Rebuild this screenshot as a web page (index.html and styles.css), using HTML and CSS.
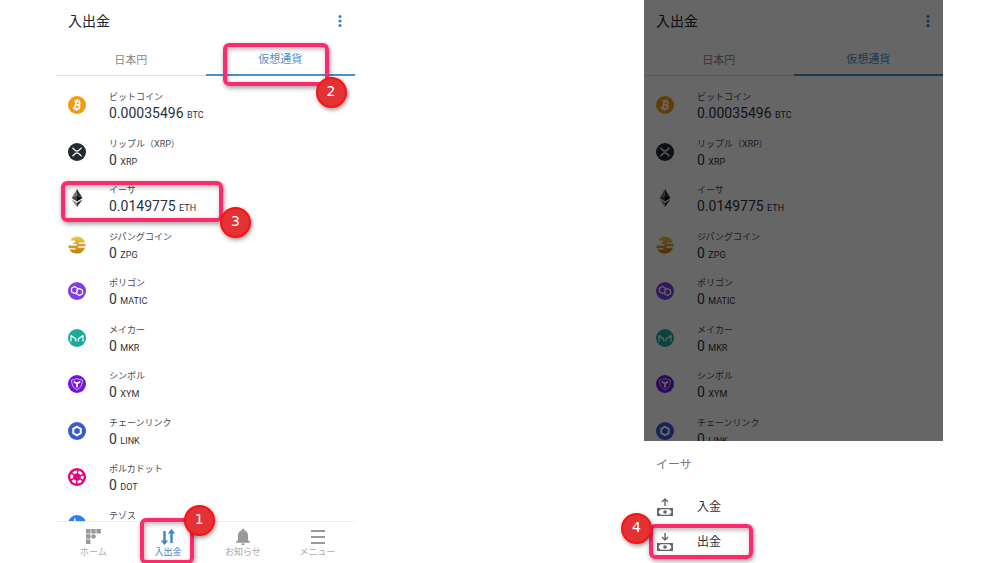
FILE: index.html
```html
<!DOCTYPE html>
<html lang="ja">
<head>
<meta charset="utf-8">
<meta name="viewport" content="width=device-width, initial-scale=1">
<title>入出金</title>
<link rel="stylesheet" href="styles.css">
</head>
<body>
<svg class="sprite" aria-hidden="true">
  <symbol id="btc" viewBox="0 0 36 36">
    <circle cx="18" cy="18" r="18" fill="#f29a0b"/>
    <g transform="rotate(14 18 18)" fill="none" stroke="#fff" stroke-width="3.400">
      <path d="M11 11h8.500a3.300 3.300 0 0 1 0 6.800H15M15 17.800h5.500a3.700 3.700 0 0 1 0 7.400H11M15 11v14"/>
      <path d="M16 6.500v4M20 6.500v4M16 25.500v4M20 25.500v4" stroke-width="2.400"/>
    </g>
  </symbol>
  <symbol id="xrp" viewBox="0 0 36 36">
    <circle cx="18" cy="18" r="18" fill="#23292f"/>
    <path d="M9 9.500l5 5q4 3.500 8 0l5-5M9 26.500l5-5q4-3.500 8 0l5 5" fill="none" stroke="#fff" stroke-width="2.200"/>
  </symbol>
  <symbol id="eth" viewBox="0 0 36 36">
    <path d="M18 0L7 18l11-5z" fill="#777"/><path d="M18 0l11 18-11-5z" fill="#333"/>
    <path d="M7 18l11-5v12z" fill="#444"/><path d="M29 18l-11-5v12z" fill="#111"/>
    <path d="M7 21l11 6.500V36z" fill="#888"/><path d="M29 21l-11 6.500V36z" fill="#333"/>
  </symbol>
  <linearGradient id="gold" x1="0" y1="0" x2="0" y2="1"><stop offset="0" stop-color="#e9c84a"/><stop offset="1" stop-color="#c27c0c"/></linearGradient>
  <symbol id="zpg" viewBox="0 0 36 36">
    <path d="M5 9Q9 1 18 1q10 0 14.500 8.500L34 13H23q-1.500 0-1.500 1.200t1.500 1.300h12v5H22q-1.500 0-1.500 1.500t1.500 1.500h12Q30 35 18 35 7 35 2.500 27H14q1.500 0 1.500-1.300T14 24.500H1V19h15q1.500 0 1.500-1.500T16 16h-4.500q-1.500 0-1.500-1.500t1.500-1.500H13q1.500 0 1.500-2T13 9z" fill="url(#gold)"/>
  </symbol>
  <symbol id="matic" viewBox="0 0 36 36">
    <circle cx="18" cy="18" r="18" fill="#7b3fe4"/>
    <path d="M19 20l-6 3-6-3.500v-7L13 9l6 3.500v3l-2 4.500M17 16l6-3 6 3.500v7L23 27l-6-3.500v-3l2-4.500" fill="none" stroke="#fff" stroke-width="2.600" stroke-linejoin="round"/>
  </symbol>
  <symbol id="mkr" viewBox="0 0 36 36">
    <circle cx="18" cy="18" r="18" fill="#1aab9b"/>
    <path d="M6 25V13l9.500 7v5M30 25V13l-9.500 7v5" fill="none" stroke="#fff" stroke-width="2.400" stroke-linejoin="round"/>
  </symbol>
  <symbol id="xym" viewBox="0 0 36 36">
    <circle cx="18" cy="18" r="18" fill="#7413dc"/>
    <path d="M18 7q5 3 11 3 0 14-11 20Q7 24 7 10q6 0 11-3z" fill="none" stroke="#dcc5fa" stroke-width="1.800"/>
    <path d="M11.500 13.500l6.500 3.500 6.500-3.500M18 17v8" fill="none" stroke="#fff" stroke-width="3.600"/>
  </symbol>
  <symbol id="link" viewBox="0 0 36 36">
    <circle cx="18" cy="18" r="18" fill="#355ad2"/>
    <path d="M18 9.500l7.500 4.250v8.500L18 26.500l-7.500-4.250v-8.500z" fill="none" stroke="#fff" stroke-width="4"/>
  </symbol>
  <symbol id="dot" viewBox="0 0 36 36">
    <circle cx="18" cy="18" r="18" fill="#e6007a"/>
    <circle cx="18" cy="18" r="10.500" fill="none" stroke="#fff" stroke-width="5.500" stroke-dasharray="8 3" stroke-dashoffset="4"/>
  </symbol>
  <symbol id="xtz" viewBox="0 0 36 36">
    <circle cx="18" cy="18" r="18" fill="#2c7df7"/>
    <path d="M7 13.500h20l-7 6q6 0 6 5t-6 4M13.500 7v15q0 4 4 4" fill="none" stroke="#fff" stroke-width="3"/>
  </symbol>
  <symbol id="note" viewBox="0 0 18 20">
    <path fill-rule="evenodd" d="M1 11h16v8H1zM4.500 12.300Q4.300 13.500 2.800 13.700v2.600q1.500.200 1.700 1.400h9q.200-1.200 1.700-1.400v-2.600q-1.500-.200-1.700-1.400z" fill="#666"/>
    <circle cx="9" cy="15" r="1.800" fill="#666"/>
  </symbol>
</svg>

<main class="stage">
  <section class="phone">
    <header class="bar">
      <h1 class="title">入出金</h1>
      <button class="more" aria-label="その他"><svg viewBox="0 0 4 14"><circle cx="2" cy="2.500" r="1.600"/><circle cx="2" cy="7" r="1.600"/><circle cx="2" cy="11.500" r="1.600"/></svg></button>
    </header>
    <div class="tabs">
      <button class="tab">日本円</button>
      <button class="tab tab-on">仮想通貨<span class="ring ring-tab"></span><span class="badge badge-tab">2</span></button>
    </div>
    <div class="view">
      <ul class="coins">
        <li><button class="coin"><svg class="mark"><use href="#btc"/></svg><span class="info"><span class="name">ビットコイン</span><span class="sum">0.00035496 <small>BTC</small></span></span></button></li>
        <li><button class="coin"><svg class="mark"><use href="#xrp"/></svg><span class="info"><span class="name">リップル（XRP）</span><span class="sum">0 <small>XRP</small></span></span></button></li>
        <li><button class="coin"><svg class="mark"><use href="#eth"/></svg><span class="info"><span class="name">イーサ</span><span class="sum">0.0149775 <small>ETH</small></span></span><span class="ring ring-coin"></span><span class="badge badge-coin">3</span></button></li>
        <li><button class="coin"><svg class="mark"><use href="#zpg"/></svg><span class="info"><span class="name">ジパングコイン</span><span class="sum">0 <small>ZPG</small></span></span></button></li>
        <li><button class="coin"><svg class="mark"><use href="#matic"/></svg><span class="info"><span class="name">ポリゴン</span><span class="sum">0 <small>MATIC</small></span></span></button></li>
        <li><button class="coin"><svg class="mark"><use href="#mkr"/></svg><span class="info"><span class="name">メイカー</span><span class="sum">0 <small>MKR</small></span></span></button></li>
        <li><button class="coin"><svg class="mark"><use href="#xym"/></svg><span class="info"><span class="name">シンボル</span><span class="sum">0 <small>XYM</small></span></span></button></li>
        <li><button class="coin"><svg class="mark"><use href="#link"/></svg><span class="info"><span class="name">チェーンリンク</span><span class="sum">0 <small>LINK</small></span></span></button></li>
        <li><button class="coin"><svg class="mark"><use href="#dot"/></svg><span class="info"><span class="name">ポルカドット</span><span class="sum">0 <small>DOT</small></span></span></button></li>
        <li><button class="coin"><svg class="mark"><use href="#xtz"/></svg><span class="info"><span class="name">テゾス</span></span></button></li>
      </ul>
    </div>
    <nav class="nav">
      <button class="nav-item"><svg viewBox="0 0 18 18" fill="#999"><path d="M2 1h4.500v4.500H2zM7.200 1h4.500v4.500H7.200zM12.400 1h4.500v4.500h-4.500zM2 6.200h4.500v4.500H2zM2 11.400h4.500v4.500H2z"/><circle cx="9.500" cy="8.500" r="2.300"/></svg>ホーム</button>
      <button class="nav-item nav-on"><svg viewBox="0 0 18 18" fill="#3a86c4"><path d="M4.300 3h2.400v9.500h2.500l-3.700 4.500-3.700-4.500h2.500zM11.300 15V5.500H8.800L12.500 1l3.700 4.500h-2.500V15z"/></svg>入出金<span class="ring ring-nav"></span><span class="badge badge-nav">1</span></button>
      <button class="nav-item"><svg viewBox="0 0 18 18" fill="#999"><path d="M9 .500q1.300 0 1.300 1.700Q14 3.500 14 7.500V12l2 2v.800H2V14l2-2V7.500q0-4 3.700-5.300Q7.700.500 9 .500zM7 15.500h4q0 1.500-2 1.500t-2-1.500z"/></svg>お知らせ</button>
      <button class="nav-item"><svg viewBox="0 0 18 18" fill="none" stroke="#999" stroke-width="2"><path d="M2 3h14M2 9h14M2 15h14"/></svg>メニュー</button>
    </nav>
  </section>

  <section class="phone">
    <div class="behind">
      <header class="bar">
        <h2 class="title">入出金</h2>
        <button class="more" aria-label="その他"><svg viewBox="0 0 4 14"><circle cx="2" cy="2.500" r="1.600"/><circle cx="2" cy="7" r="1.600"/><circle cx="2" cy="11.500" r="1.600"/></svg></button>
      </header>
      <div class="tabs">
        <button class="tab">日本円</button>
        <button class="tab tab-on">仮想通貨</button>
      </div>
      <div class="view">
        <ul class="coins">
          <li><button class="coin"><svg class="mark"><use href="#btc"/></svg><span class="info"><span class="name">ビットコイン</span><span class="sum">0.00035496 <small>BTC</small></span></span></button></li>
          <li><button class="coin"><svg class="mark"><use href="#xrp"/></svg><span class="info"><span class="name">リップル（XRP）</span><span class="sum">0 <small>XRP</small></span></span></button></li>
          <li><button class="coin"><svg class="mark"><use href="#eth"/></svg><span class="info"><span class="name">イーサ</span><span class="sum">0.0149775 <small>ETH</small></span></span></button></li>
          <li><button class="coin"><svg class="mark"><use href="#zpg"/></svg><span class="info"><span class="name">ジパングコイン</span><span class="sum">0 <small>ZPG</small></span></span></button></li>
          <li><button class="coin"><svg class="mark"><use href="#matic"/></svg><span class="info"><span class="name">ポリゴン</span><span class="sum">0 <small>MATIC</small></span></span></button></li>
          <li><button class="coin"><svg class="mark"><use href="#mkr"/></svg><span class="info"><span class="name">メイカー</span><span class="sum">0 <small>MKR</small></span></span></button></li>
          <li><button class="coin"><svg class="mark"><use href="#xym"/></svg><span class="info"><span class="name">シンボル</span><span class="sum">0 <small>XYM</small></span></span></button></li>
          <li><button class="coin"><svg class="mark"><use href="#link"/></svg><span class="info"><span class="name">チェーンリンク</span><span class="sum">0 <small>LINK</small></span></span></button></li>
        </ul>
      </div>
      <div class="shade"></div>
    </div>
    <div class="sheet">
      <h3 class="sheet-title">イーサ</h3>
      <button class="action"><svg viewBox="0 0 18 20"><use href="#note"/><path d="M9 9V2.500M6 5l3-3 3 3" fill="none" stroke="#666" stroke-width="1.400"/></svg>入金</button>
      <button class="action"><svg viewBox="0 0 18 20"><use href="#note"/><path d="M9 1v7M6 5l3 3 3-3" fill="none" stroke="#666" stroke-width="1.400"/></svg>出金<span class="ring ring-action"></span><span class="badge badge-action">4</span></button>
    </div>
  </section>
</main>
</body>
</html>
```

FILE: styles.css
```css
* { box-sizing: border-box; }

body {
  margin: 0;
  background: #fff;
  color: #2a323e;
  font-family: Roboto, "Noto Sans CJK JP", sans-serif;
}

button {
  position: relative;
  margin: 0;
  padding: 0;
  border: 0;
  background: none;
  color: inherit;
  font: inherit;
  cursor: pointer;
}

.sprite {
  position: absolute;
  width: 0;
  height: 0;
}

.stage {
  display: flex;
  justify-content: space-between;
  height: 100vh;
  padding: 0 57px 0 56px;
}

.phone {
  display: flex;
  flex-direction: column;
  width: 34%;
  max-width: 299px;
  min-height: 0;
}

.bar {
  display: flex;
  align-items: center;
  justify-content: space-between;
  flex: none;
  height: 42px;
  padding: 0 13px 0 12px;
}

.title {
  margin: 0;
  color: #222;
  font-size: 14px;
  font-weight: 400;
  line-height: 20px;
}

.more { display: flex; }

.more svg {
  width: 4px;
  height: 14px;
  fill: #3a86c4;
}

.tabs {
  display: grid;
  grid-template-columns: 1fr 1fr;
  flex: none;
  height: 34px;
}

.tab {
  border-bottom: 1px solid #ddd;
  color: #888;
  font-size: 11px;
}

.tab-on {
  z-index: 1;
  border-bottom: 2px solid #4a90c8;
  color: #4a90c8;
}

.view {
  flex: 1;
  min-height: 0;
  overflow: hidden;
}

.coins {
  display: grid;
  grid-template-rows: repeat(10, 1fr);
  height: 471px;
  margin: 0;
  padding: 6px 0 0;
  list-style: none;
}

.coin {
  display: flex;
  align-items: center;
  gap: 23px;
  width: 100%;
  height: 100%;
  padding-left: 12px;
  text-align: left;
}

.mark {
  flex: none;
  width: 18px;
  height: 18px;
}

.info {
  display: grid;
  grid-template-rows: 16px 16px;
}

.name {
  color: #444b55;
  font-size: 9px;
  line-height: 16px;
}

.sum {
  font-size: 14px;
  line-height: 16px;
  white-space: nowrap;
}

.sum small { font-size: 9px; }

.nav {
  display: grid;
  grid-template-columns: repeat(4, 1fr);
  flex: none;
  height: 42px;
  border-top: 1px solid #eee;
}

.nav-item {
  display: flex;
  flex-direction: column;
  align-items: center;
  padding-top: 6px;
  color: #aaa;
  font-size: 9px;
  line-height: 13px;
}

.nav-item svg {
  width: 18px;
  height: 18px;
}

.nav-on { color: #3a86c4; }

.behind {
  position: relative;
  display: flex;
  flex: 1;
  flex-direction: column;
  min-height: 0;
}

.shade {
  position: absolute;
  inset: 0;
  z-index: 2;
  background: rgba(0, 0, 0, 0.6);
}

.sheet {
  display: flex;
  flex: none;
  flex-direction: column;
  height: 122px;
  padding-top: 12px;
}

.sheet-title {
  margin: 0 0 12px;
  padding-left: 12px;
  color: #777;
  font-size: 12px;
  font-weight: 400;
  line-height: 24px;
}

.action {
  display: flex;
  align-items: center;
  gap: 23px;
  height: 35px;
  padding-left: 12px;
  font-size: 12px;
  line-height: 20px;
}

.action svg {
  width: 18px;
  height: 20px;
}

/* Step callouts lying over the screens */
.ring {
  position: absolute;
  border: 4px solid #fb2b6c;
  border-radius: 6px;
  box-shadow: 1px 2px 5px rgba(0, 0, 0, 0.4), inset 1px 2px 5px rgba(0, 0, 0, 0.3);
}

.badge {
  position: absolute;
  width: 31px;
  height: 31px;
  border: 2px solid #fb1212;
  border-radius: 50%;
  background: #e23236;
  box-shadow: 1px 2px 4px rgba(0, 0, 0, 0.4);
  color: #fff;
  font: 14px/25px "DejaVu Sans", sans-serif;
  text-align: center;
}

.ring-tab { top: 1px; left: 17px; width: 106px; height: 43px; }
.badge-tab { top: 35px; left: 110px; }
.ring-coin { top: 6px; left: 5px; width: 162px; height: 41px; }
.badge-coin { top: 32px; left: 164px; }
.ring-nav { top: -4px; left: 9px; width: 54px; height: 46px; }
.badge-nav { top: -17px; left: 53px; }
.ring-action { top: 0; left: 5px; width: 104px; height: 35px; }
.badge-action { top: -11px; left: -23px; }
```
